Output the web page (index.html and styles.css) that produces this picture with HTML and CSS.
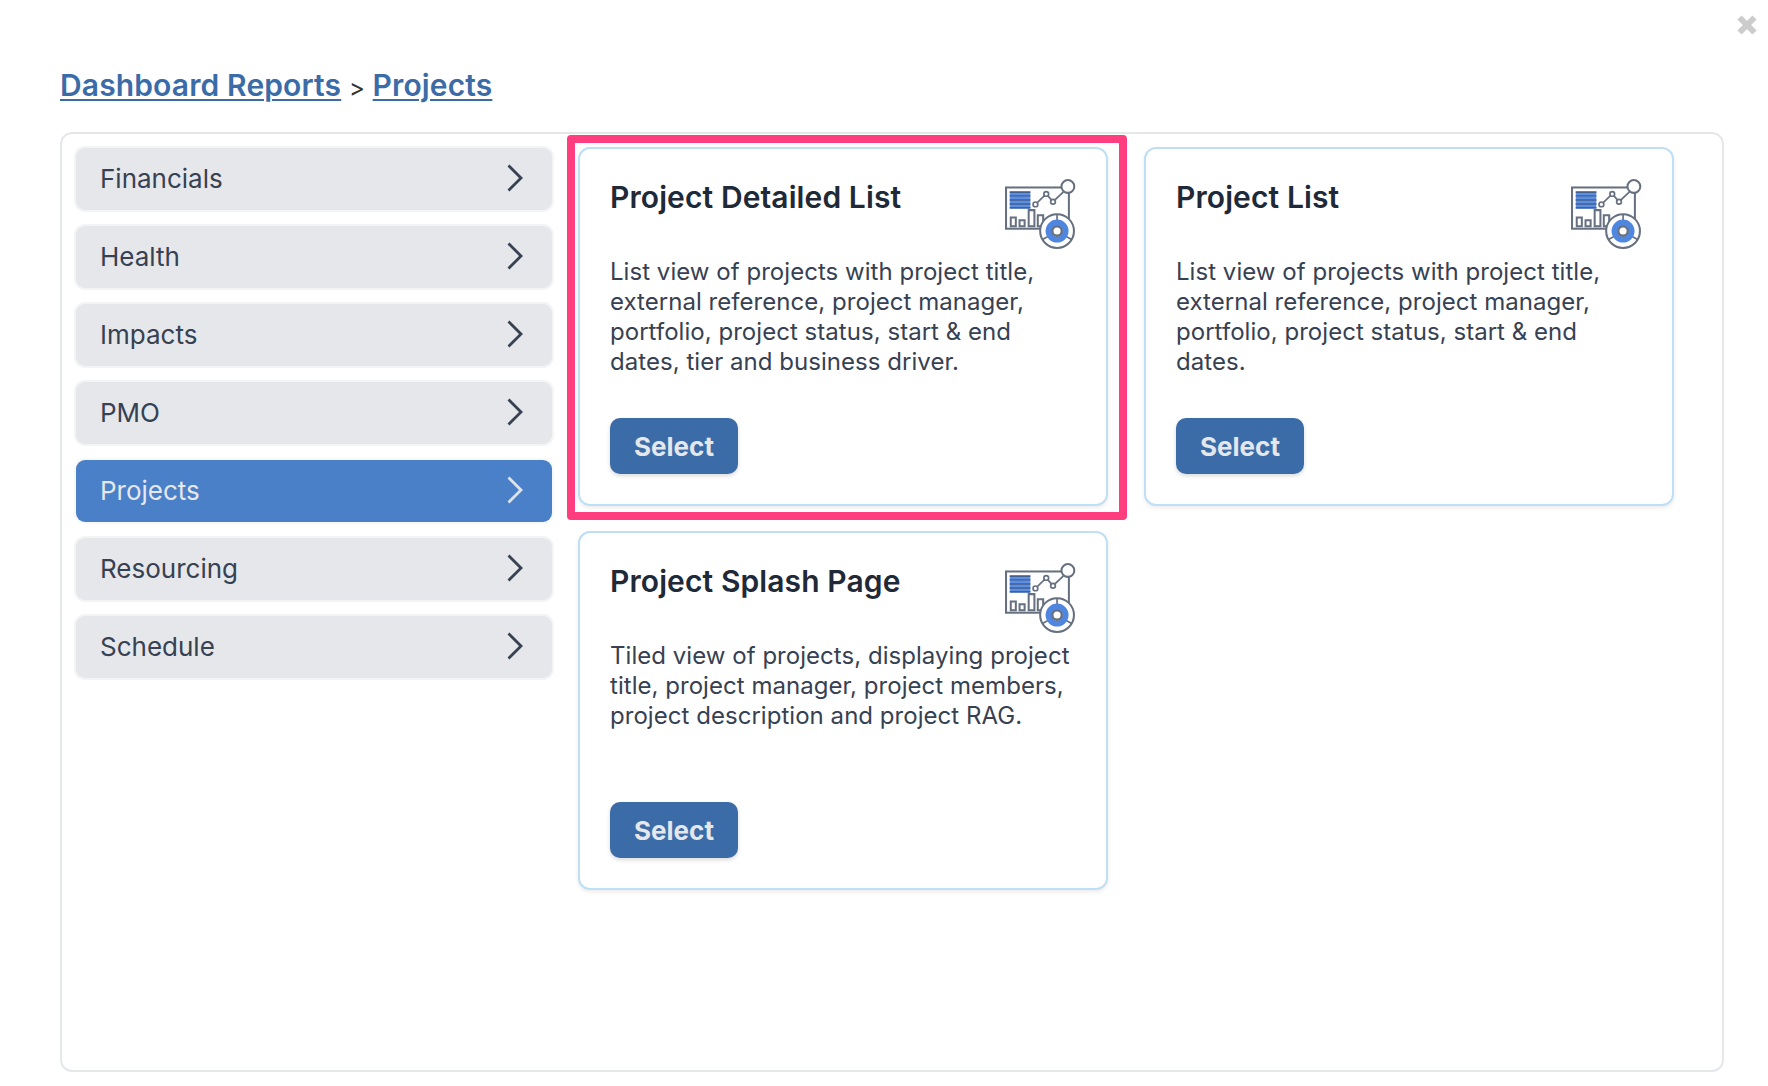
FILE: index.html
```html
<!DOCTYPE html>
<html lang="en">
<head>
<meta charset="utf-8">
<title>Dashboard Reports</title>
<link rel="stylesheet" href="styles.css">
</head>
<body>
<svg class="defs" width="0" height="0" aria-hidden="true">
  <symbol id="report" viewBox="72 52 216 216">
    <rect x="78" y="83" width="186" height="122" fill="#fff" stroke="#667080" stroke-width="6"/>
    <rect x="89" y="94" width="61" height="52" fill="#5b8fe6"/>
    <path d="M89 97h61M89 108h61M89 120h61M89 132h61M89 143h61" stroke="#46608c" stroke-width="4" fill="none"/>
    <path d="M165 133 197 102 217 125 248 96" stroke="#667080" stroke-width="5" fill="none"/>
    <circle cx="165" cy="133" r="7" fill="#fff" stroke="#667080" stroke-width="5"/>
    <circle cx="197" cy="102" r="7" fill="#fff" stroke="#667080" stroke-width="5"/>
    <circle cx="217" cy="125" r="7" fill="#fff" stroke="#667080" stroke-width="5"/>
    <circle cx="261" cy="80" r="19" fill="#fff" stroke="#667080" stroke-width="6"/>
    <path d="M92 172h15v26H92zM118 180h15v18h-15zM145 150h17v48h-17zM172 165h16v33h-16z" fill="#fff" stroke="#667080" stroke-width="6"/>
    <circle cx="229" cy="212" r="50" fill="#fff" stroke="#667080" stroke-width="6"/>
    <path d="M229 162v18M186 237l16-9M272 237l-16-9" stroke="#667080" stroke-width="5" fill="none"/>
    <circle cx="229" cy="212" r="25" fill="none" stroke="#4f86e0" stroke-width="18"/>
    <circle cx="229" cy="212" r="14" fill="#fff" stroke="#667080" stroke-width="7"/>
  </symbol>
  <symbol id="chev" viewBox="0 0 16 28">
    <path d="M1.5 1.5 14 14 1.5 26.5" fill="none" stroke="currentColor" stroke-width="2.8"/>
  </symbol>
</svg>

<main class="page">
  <svg class="close" viewBox="0 0 20 20" aria-label="Close">
    <path d="M2.5 2.5 17.5 17.5M17.5 2.5 2.5 17.5" stroke="#cccccc" stroke-width="6" fill="none"/>
  </svg>

  <nav class="crumbs">
    <a href="#">Dashboard Reports</a>
    <span class="sep">&gt;</span>
    <a href="#">Projects</a>
  </nav>

  <section class="panel">
    <ul class="menu">
      <li class="menu-item"><span>Financials</span><svg class="chev"><use href="#chev"/></svg></li>
      <li class="menu-item"><span>Health</span><svg class="chev"><use href="#chev"/></svg></li>
      <li class="menu-item"><span>Impacts</span><svg class="chev"><use href="#chev"/></svg></li>
      <li class="menu-item"><span>PMO</span><svg class="chev"><use href="#chev"/></svg></li>
      <li class="menu-item active"><span>Projects</span><svg class="chev"><use href="#chev"/></svg></li>
      <li class="menu-item"><span>Resourcing</span><svg class="chev"><use href="#chev"/></svg></li>
      <li class="menu-item"><span>Schedule</span><svg class="chev"><use href="#chev"/></svg></li>
    </ul>

    <div class="cards">
      <article class="card highlighted">
        <header class="card-head">
          <h2>Project Detailed List</h2>
          <svg class="report-icon"><use href="#report"/></svg>
        </header>
        <p>List view of projects with project title, external reference, project manager, portfolio, project status, start &amp; end dates, tier and business driver.</p>
        <button class="select">Select</button>
      </article>
      <article class="card">
        <header class="card-head">
          <h2>Project List</h2>
          <svg class="report-icon"><use href="#report"/></svg>
        </header>
        <p>List view of projects with project title, external reference, project manager, portfolio, project status, start &amp; end dates.</p>
        <button class="select">Select</button>
      </article>
      <article class="card">
        <header class="card-head">
          <h2>Project Splash Page</h2>
          <svg class="report-icon"><use href="#report"/></svg>
        </header>
        <p>Tiled view of projects, displaying project title, project manager, project members, project description and project RAG.</p>
        <button class="select">Select</button>
      </article>
    </div>
  </section>
</main>
</body>
</html>
```

FILE: styles.css
```css
* { box-sizing: border-box; }

html, body {
  margin: 0;
  height: 100%;
  background: #fff;
}

body {
  font-family: Inter, "Liberation Sans", sans-serif;
  color: #374151;
}

.defs { position: absolute; }

.page {
  position: relative;
  height: 1086px;
  padding: 65px 44px 14px 60px;
  display: flex;
  flex-direction: column;
}

.close {
  position: absolute;
  top: 15px;
  right: 11px;
  width: 20px;
  height: 20px;
}

.crumbs {
  height: 40px;
  margin-bottom: 27px;
  font-size: 30px;
  line-height: 40px;
  font-weight: 600;
  letter-spacing: 0.13px;
}

.crumbs a {
  color: #3c6ca8;
  text-decoration: underline;
  text-decoration-thickness: 2px;
  text-underline-offset: 3px;
}

.crumbs .sep {
  font-size: 24px;
  font-weight: 400;
  color: #333;
}

.panel {
  flex: 1;
  display: flex;
  align-items: flex-start;
  gap: 26px;
  padding: 13px 14px;
  border: 2px solid #e5e7eb;
  border-radius: 12px;
}

.menu {
  list-style: none;
  margin: 1px 0 0;
  padding: 0;
  width: 476px;
  display: flex;
  flex-direction: column;
  gap: 16px;
}

.menu-item {
  height: 62px;
  padding: 0 29px 2px 24px;
  display: flex;
  align-items: center;
  justify-content: space-between;
  font-size: 26px;
  color: #374151;
  background: #e5e7eb;
  border-radius: 9px;
  box-shadow: 0 0 0 2px #f3f4f6;
}

.menu-item.active {
  background: #4a80c8;
  color: #e5e7eb;
  box-shadow: 0 0 0 2px #f7f8fa;
}

.chev {
  width: 16px;
  height: 28px;
  color: #374151;
}

.active .chev { color: #dfe3ea; }

.cards {
  display: grid;
  grid-template-columns: 530px 530px;
  grid-auto-rows: 359px;
  column-gap: 36px;
  row-gap: 25px;
}

.card {
  position: relative;
  display: flex;
  flex-direction: column;
  padding: 30px;
  border: 2px solid #bfdff5;
  border-radius: 12px;
  background: #fff;
  box-shadow: 0 2px 4px rgba(0, 0, 0, 0.08);
}

.highlighted::after {
  content: "";
  position: absolute;
  inset: -14px -21px -16px -13px;
  border: 8px solid #ff3d7f;
  border-radius: 4px;
  pointer-events: none;
}

.card-head {
  height: 78px;
  display: flex;
  justify-content: space-between;
  align-items: flex-start;
}

.card h2 {
  margin: 0;
  font-size: 30px;
  line-height: 37px;
  letter-spacing: 0.1px;
  font-weight: 600;
  color: #1f2937;
}

.report-icon {
  width: 73px;
  height: 73px;
  margin: -2px -1px 0 0;
  flex: none;
}

.card p {
  flex: 1;
  margin: 0;
  font-size: 24px;
  line-height: 30px;
  letter-spacing: 0.04px;
  color: #374151;
}

.select {
  align-self: flex-start;
  width: 128px;
  height: 56px;
  padding: 0;
  border: 0;
  border-radius: 10px;
  background: #3c6ca8;
  color: #e5e7eb;
  font: 700 26px Inter, "Liberation Sans", sans-serif;
  box-shadow: 0 2px 4px rgba(0, 0, 0, 0.15);
}
```
